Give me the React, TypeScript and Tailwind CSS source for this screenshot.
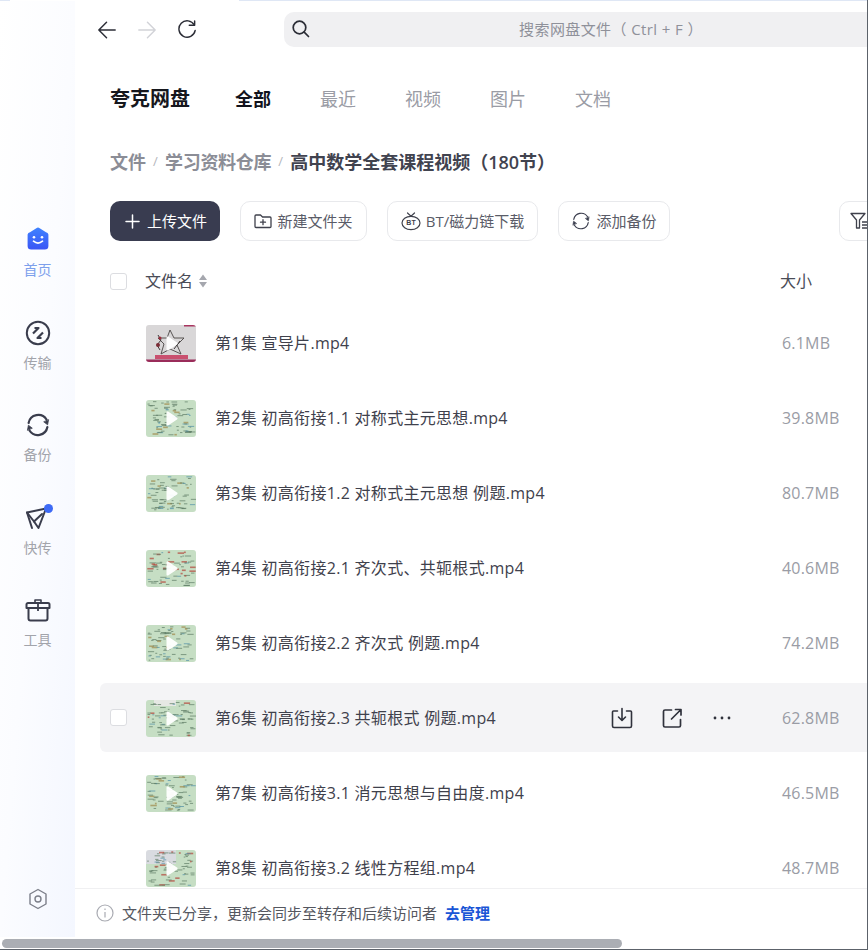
import React from "react";

const rows = [
  ["第1集 宣导片.mp4", "6.1MB"],
  ["第2集 初高衔接1.1 对称式主元思想.mp4", "39.8MB"],
  ["第3集 初高衔接1.2 对称式主元思想 例题.mp4", "80.7MB"],
  ["第4集 初高衔接2.1 齐次式、共轭根式.mp4", "40.6MB"],
  ["第5集 初高衔接2.2 齐次式 例题.mp4", "74.2MB"],
  ["第6集 初高衔接2.3 共轭根式 例题.mp4", "62.8MB"],
  ["第7集 初高衔接3.1 消元思想与自由度.mp4", "46.5MB"],
  ["第8集 初高衔接3.2 线性方程组.mp4", "48.7MB"],
];

function Marks({ seed, accent }: { seed: number; accent: string }) {
  const out: React.ReactElement[] = [];
  let s = seed * 7919 + 13;
  const next = () => {
    s = (s * 1103515245 + 12345) & 0x7fffffff;
    return s / 0x7fffffff;
  };
  for (let i = 0; i < 70; i++) {
    const x = 1 + next() * 44;
    const y = 1 + next() * 34;
    const w = 1.5 + next() * 5;
    const r = next();
    out.push(
      <rect key={i} x={x} y={y} width={w} height={r > 0.85 ? 1.6 : 1} fill={r > 0.86 ? accent : r > 0.72 ? "#4f8fa6" : "#5d7a64"} opacity={0.7} />
    );
  }
  return <>{out}</>;
}

function Thumb({ index }: { index: number }) {
  const first = index === 0;
  const eighth = index === 7;
  return (
    <div className="relative mt-[2px] h-[37px] w-[50px] shrink-0 overflow-hidden rounded-[3px]">
      <svg viewBox="0 0 50 37" className="h-full w-full blur-[0.6px]">
        {first ? (
          <>
            <rect width="50" height="37" fill="#d9d7d8" />
            <rect x="38" y="0" width="12" height="1.5" fill="#a8355f" />
            <path d="M24 5 L28 13 L38 13 L31 20 L35 29 L24 24 L15 29 L18 19 L12 13 L21 13 Z" fill="none" stroke="#4a4544" strokeWidth="0.9" />
            <path d="M12 10 l3 5 l-4 5 l3 5 M34 16 l-6 8" fill="none" stroke="#3e3a3a" strokeWidth="1" />
            <circle cx="14" cy="13" r="1.5" fill="#9c2b3b" />
            <circle cx="12" cy="20" r="2" fill="#7a2b35" />
            <rect x="9" y="30" width="33" height="4" fill="#c9506f" />
            <rect y="34.5" width="50" height="2.5" fill="#9a2c5a" />
          </>
        ) : (
          <>
            <rect width="50" height="37" fill="#c6dec4" />
            {eighth && <rect width="30" height="14" fill="#d9dbe0" />}
            {index === 5 && <rect x="8" y="0" width="22" height="6" fill="#e6e8e4" />}
            <Marks seed={index + 2} accent={index === 3 || index === 5 || index === 7 ? "#b3473c" : "#a08a4c"} />
          </>
        )}
      </svg>
      <svg viewBox="0 0 50 37" className="absolute inset-0 h-full w-full">
        <path d="M20.5 12.5 a1 1 0 0 1 1.6 -0.9 L31 17.6 a1 1 0 0 1 0 1.8 L22.1 25.4 a1 1 0 0 1 -1.6 -0.9 Z" fill="#ffffff" opacity="0.95" />
      </svg>
    </div>
  );
}

const stroke = "#3a3d4d";

function HomeIcon() {
  return (
    <svg className="-translate-y-[1px]" width="24" height="24" viewBox="0 0 24 24">
      <defs>
        <linearGradient id="h" x1="0" y1="0" x2="0" y2="1">
          <stop offset="0" stopColor="#3f82ff" />
          <stop offset="1" stopColor="#3a55f5" />
        </linearGradient>
      </defs>
      <path d="M10.3 1.2 a3 3 0 0 1 3.4 0 L20 5.2 A3 3 0 0 1 22.4 7.6 V19 a3.6 3.6 0 0 1 -3.6 3.6 H5.2 A3.6 3.6 0 0 1 1.6 19 V7.6 A3 3 0 0 1 4 5.2 Z" fill="url(#h)" />
      <circle cx="8" cy="10.2" r="1.3" fill="#fff" />
      <circle cx="16" cy="10.2" r="1.3" fill="#fff" />
      <path d="M7.5 14.2 q4.5 3.8 9 0" fill="none" stroke="#fff" strokeWidth="1.7" strokeLinecap="round" />
    </svg>
  );
}

function TransferIcon() {
  return (
    <svg width="26" height="26" viewBox="0 0 26 26" fill="none" stroke={stroke}>
      <circle cx="13" cy="13" r="11.2" strokeWidth="2" />
      <path d="M8 13.5 L13.5 8 H9.5 M18 12.5 L12.5 18 H16.5" strokeWidth="2.2" strokeLinejoin="round" />
    </svg>
  );
}

function BackupIcon({ size = 26, sw = 2.2 }: { size?: number; sw?: number }) {
  return (
    <svg width={size} height={size} viewBox="0 0 26 26" fill="none" stroke={stroke} strokeWidth={sw} strokeLinecap="round">
      <path d="M3.6 11 A9.8 9.8 0 0 1 21.5 7.5" />
      <path d="M22.4 15 A9.8 9.8 0 0 1 4.5 18.5" />
      <path d="M23.5 8 L22.6 12.8 L19 10 Z" fill={stroke} strokeWidth="0.8" strokeLinejoin="round" />
      <path d="M2.5 18 L3.4 13.2 L7 16 Z" fill={stroke} strokeWidth="0.8" strokeLinejoin="round" />
    </svg>
  );
}

function SendIcon() {
  return (
    <svg width="28" height="28" viewBox="0 0 28 28" fill="none" stroke={stroke} strokeWidth="2" strokeLinejoin="round" strokeLinecap="round">
      <path d="M3 8.5 L22 4.5 L14.5 24 L10 17.5 Z" />
      <path d="M3 8.5 L8 24 M10 17.5 L18 10" />
    </svg>
  );
}

function ToolIcon() {
  return (
    <svg width="26" height="24" viewBox="0 0 26 24" fill="none" stroke={stroke} strokeWidth="2" strokeLinejoin="round">
      <path d="M1.5 6.5 a1.5 1.5 0 0 1 1.5 -1.5 H23 a1.5 1.5 0 0 1 1.5 1.5 V10 H1.5 Z" />
      <path d="M3.5 10 V20.5 a2 2 0 0 0 2 2 H20.5 a2 2 0 0 0 2 -2 V10" />
      <path d="M10 4.5 V2 H16 V4.5" strokeWidth="1.6" />
      <path d="M13 6 V13" strokeWidth="1.8" />
    </svg>
  );
}

function NavItem({ icon, label, active }: { icon: React.ReactNode; label: string; active?: boolean }) {
  return (
    <div className="flex h-[92.5px] flex-col items-center">
      <div className="relative flex h-[28px] items-center justify-center">{icon}</div>
      <div className={`mt-[6px] text-[14px] leading-[20px] ${active ? "text-[#7da0ec]" : "text-[#a2a4ab]"}`}>{label}</div>
    </div>
  );
}

function Btn({ icon, label, w, gap }: { icon: React.ReactNode; label: string; w: string; gap: string }) {
  return (
    <div className={`flex h-[40px] items-center justify-center rounded-[10px] border border-[#e8e9ec] text-[15px] text-[#5a5c68] ${w} ${gap}`}>
      {icon}
      <span>{label}</span>
    </div>
  );
}

export default function App() {
  return (
    <div
      className="relative flex h-[950px] w-[868px] flex-col overflow-hidden border-r border-b border-r-[#5c626a] border-b-[#5c626a] bg-white text-[#33353f]"
      style={{ fontFamily: '"Open Sans", "Noto Sans CJK SC", sans-serif' }}
    >
      <div className="flex h-[1px] shrink-0 justify-between">
        <div className="w-[10px] bg-[#dfe7f5]" />
        <div className="w-[628px] bg-[#dfe7f5]" />
      </div>
      <div className="flex h-[936px] shrink-0">
        {/* Sidebar */}
        <aside className="flex w-[75px] shrink-0 flex-col bg-gradient-to-br from-white via-[#fbfcff] to-[#f4f7ff] pt-[225px]">
          <NavItem icon={<HomeIcon />} label="首页" active />
          <NavItem icon={<TransferIcon />} label="传输" />
          <NavItem icon={<BackupIcon />} label="备份" />
          <NavItem
            icon={
              <>
                <SendIcon />
                <span className="absolute right-[-1px] top-[0px] h-[9px] w-[9px] rounded-full bg-[#3d6af5]" />
              </>
            }
            label="快传"
          />
          <NavItem icon={<ToolIcon />} label="工具" />
          <div className="mt-auto flex justify-center pb-[27px]">
            <svg width="20" height="22" viewBox="0 0 20 22" fill="none" stroke="#7c7f8a" strokeWidth="1.4">
              <path d="M10 1.5 L18 6 V16 L10 20.5 L2 16 V6 Z" strokeLinejoin="round" />
              <circle cx="10" cy="11" r="3" />
            </svg>
          </div>
        </aside>

        {/* Main */}
        <main className="flex min-w-0 flex-1 flex-col overflow-hidden">
          {/* Top bar */}
          <div className="flex h-[46px] shrink-0 items-end pl-[22px]">
            <div className="flex h-[35px] w-[187px] shrink-0 items-center gap-[20px]">
              <svg width="20" height="20" viewBox="0 0 22 22" fill="none" stroke="#2b2d36" strokeWidth="1.6" strokeLinecap="round" strokeLinejoin="round">
                <path d="M20 11 H2 M10.5 2.5 L2 11 L10.5 19.5" />
              </svg>
              <svg width="20" height="20" viewBox="0 0 22 22" fill="none" stroke="#d2d3d8" strokeWidth="1.6" strokeLinecap="round" strokeLinejoin="round">
                <path d="M2 11 H20 M11.5 2.5 L20 11 L11.5 19.5" />
              </svg>
              <svg width="20" height="20" viewBox="0 0 22 22" fill="none" stroke="#2b2d36" strokeWidth="1.6" strokeLinecap="round" strokeLinejoin="round">
                <path d="M19 5.5 A9 9 0 1 0 20 11.5" />
                <path d="M13.5 5.8 H19.4 V1" />
              </svg>
            </div>
            <div className="relative flex h-[35px] w-[654px] shrink-0 items-center justify-center rounded-[10px] bg-[#f0f0f2] text-[15px] tracking-[0.4px] text-[#8f919a]">
              <svg className="absolute left-[7px] top-[7px]" width="20" height="20" viewBox="0 0 20 20" fill="none" stroke="#2b2d36" strokeWidth="1.7" strokeLinecap="round">
                <circle cx="8.5" cy="8.5" r="6.3" />
                <path d="M13.2 13.2 L17.5 17.5" />
              </svg>
              搜索网盘文件（ Ctrl + F ）
            </div>
          </div>

          <div className="flex min-h-0 flex-1 flex-col pl-[35px]">
            {/* Title + tabs */}
            <div className="mt-[36px] flex h-[32px] shrink-0 items-center">
              <div className="w-[125px] text-[20px] font-bold text-[#16171d]">夸克网盘</div>
              <div className="flex gap-[49px] text-[18px] text-[#9a9ca5]">
                <span className="font-bold text-[#12131c]">全部</span>
                <span>最近</span>
                <span>视频</span>
                <span>图片</span>
                <span>文档</span>
              </div>
            </div>

            {/* Breadcrumb */}
            <div className="mt-[31px] flex h-[32px] shrink-0 items-center text-[18px] font-semibold text-[#8b8d96]">
              <span>文件</span>
              <span className="w-[19px] text-center text-[13px] font-normal text-[#b4b6bc]">/</span>
              <span className="tracking-[-0.3px]">学习资料仓库</span>
              <span className="w-[19px] text-center text-[13px] font-normal text-[#b4b6bc]">/</span>
              <span className="text-[#41434f]">高中数学全套课程视频（180节）</span>
            </div>

            {/* Toolbar */}
            <div className="mt-[23px] flex h-[40px] shrink-0 items-center gap-[20px]">
              <div className="flex h-[40px] w-[110px] shrink-0 items-center gap-[7px] rounded-[10px] bg-[#393c50] pl-[15px] text-[15px] text-white">
                <svg width="15" height="15" viewBox="0 0 15 15" stroke="#fff" strokeWidth="1.5" strokeLinecap="round">
                  <path d="M7.5 1 V14 M1 7.5 H14" />
                </svg>
                <span>上传文件</span>
              </div>
              <Btn
                w="w-[127px] shrink-0"
                gap="gap-[5px]"
                label="新建文件夹"
                icon={
                  <svg width="18" height="16" viewBox="0 0 18 16" fill="none" stroke="#3f414c" strokeWidth="1.3" strokeLinejoin="round">
                    <path d="M1 3 a1 1 0 0 1 1 -1 H6.5 L8.5 4 H16 a1 1 0 0 1 1 1 V13.5 a1 1 0 0 1 -1 1 H2 a1 1 0 0 1 -1 -1 Z" />
                    <path d="M9 6.7 V11.7 M6.5 9.2 H11.5" strokeLinecap="round" />
                  </svg>
                }
              />
              <Btn
                w="w-[151px] shrink-0"
                gap="gap-[5px]"
                label="BT/磁力链下载"
                icon={
                  <svg width="20" height="20" viewBox="0 0 20 20" fill="none" stroke="#3f414c" strokeWidth="1.2" strokeLinecap="round">
                    <ellipse cx="10" cy="12" rx="9" ry="6.7" />
                    <path d="M6.5 2 L10 5.2 L13.5 2" />
                    <text x="10" y="14.4" textAnchor="middle" fontSize="7" fontWeight="700" fill="#3f414c" stroke="none" fontFamily="Liberation Sans">BT</text>
                  </svg>
                }
              />
              <Btn w="w-[112px] shrink-0" gap="gap-[5px]" label="添加备份" icon={<BackupIcon size={20} sw={1.5} />} />
              <div className="ml-[149px] flex h-[40px] w-[60px] shrink-0 items-center rounded-[10px] border border-[#e8e9ec] pl-[10px]">
                <svg width="20" height="18" viewBox="0 0 20 18" fill="none" stroke="#3f414c" strokeWidth="1.3" strokeLinejoin="round">
                  <path d="M1 1.5 H15 L9.5 8 V16 H6.5 V8 Z" />
                  <path d="M12 10 H19 M12 13 H19 M12 16 H19" />
                </svg>
              </div>
            </div>

            {/* Table head */}
            <div className="mt-[20px] flex h-[40px] shrink-0 items-center">
              <div className="h-[17px] w-[17px] shrink-0 rounded-[3px] border border-[#dcdde1] bg-white" />
              <span className="ml-[18px] text-[16px] text-[#4a4c57]">文件名</span>
              <svg className="ml-[5px]" width="10" height="14" viewBox="0 0 10 14" fill="#a5a7ae">
                <path d="M5 0.5 L9 6 H1 Z M5 13.5 L1 8 H9 Z" />
              </svg>
              <span className="ml-[572px] text-[16px] text-[#4a4c57]">大小</span>
            </div>

            {/* Rows */}
            <div className="-ml-[10px] mt-[4px] min-h-0 flex-1 overflow-hidden">
              {rows.map(([name, size], i) => {
                const hover = i === 5;
                return (
                  <div key={name} className="flex h-[75px] items-center">
                    <div className={`flex h-[69px] w-[800px] shrink-0 items-center rounded-l-[6px] pl-[10px] ${hover ? "bg-[#f4f4f6]" : ""}`}>
                      <div className="w-[36px] shrink-0">
                        {hover && <div className="h-[17px] w-[17px] rounded-[3px] border border-[#dcdde1] bg-white" />}
                      </div>
                      <Thumb index={i} />
                      <span className="ml-[19px] w-[395px] shrink-0 whitespace-nowrap text-[16px] tracking-[0.3px] text-[#3f414c]">{name}</span>
                      <div className="flex h-[24px] w-[172px] shrink-0 items-center">
                        {hover && (
                          <>
                            <svg width="24" height="24" viewBox="0 0 24 24" fill="none" stroke="#30323c" strokeWidth="1.6" strokeLinecap="round" strokeLinejoin="round">
                              <path d="M7.5 5 H3.5 a1 1 0 0 0 -1 1 V20 a1.5 1.5 0 0 0 1.5 1.5 H20 a1.5 1.5 0 0 0 1.5 -1.5 V6 a1 1 0 0 0 -1 -1 H16.5" />
                              <path d="M12 2.5 V13.5 M8.5 11 L12 14.5 L15.5 11" />
                            </svg>
                            <svg className="ml-[26px]" width="24" height="24" viewBox="0 0 24 24" fill="none" stroke="#30323c" strokeWidth="1.7" strokeLinecap="round" strokeLinejoin="round">
                              <path d="M11.5 4 H5 a1.5 1.5 0 0 0 -1.5 1.5 V19.5 A1.5 1.5 0 0 0 5 21 H19 a1.5 1.5 0 0 0 1.5 -1.5 V13.5" />
                              <path d="M11.5 13 L20.5 4 M15.5 3.5 H21 V9" />
                            </svg>
                            <svg className="ml-[26px]" width="24" height="24" viewBox="0 0 24 24" fill="#30323c">
                              <circle cx="5" cy="12" r="1.4" />
                              <circle cx="12" cy="12" r="1.4" />
                              <circle cx="19" cy="12" r="1.4" />
                            </svg>
                          </>
                        )}
                      </div>
                      <span className="whitespace-nowrap text-[16px] tracking-[0.2px] text-[#9a9ca5]">{size}</span>
                    </div>
                  </div>
                );
              })}
            </div>
          </div>

          {/* Footer */}
          <div className="flex h-[49px] shrink-0 items-center gap-[8px] border-t border-[#f0f0f2] bg-white pl-[21px] text-[15px] text-[#55575f]">
            <svg width="18" height="18" viewBox="0 0 18 18" fill="none" stroke="#a9abb2" strokeWidth="1.2">
              <circle cx="9" cy="9" r="8" />
              <path d="M9 8 V13.5 M9 4.5 V6" />
            </svg>
            <span>文件夹已分享，更新会同步至转存和后续访问者</span>
            <span className="font-bold text-[#1a56d6]">去管理</span>
          </div>
        </main>
      </div>

      {/* Horizontal scrollbar */}
      <div className="flex h-[12px] shrink-0 items-center pl-[2px]">
        <div className="h-[9px] w-[620px] rounded-full bg-[#abaeb4]" />
      </div>
    </div>
  );
}
